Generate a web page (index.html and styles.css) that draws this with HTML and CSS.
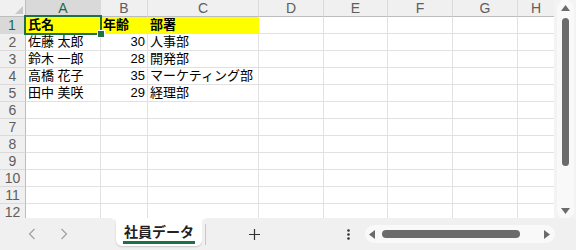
FILE: index.html
```html
<!DOCTYPE html>
<html lang="ja">
<head>
<meta charset="utf-8">
<link rel="stylesheet" href="styles.css">
</head>
<body>
<div class="app">
  <div class="main">
    <div class="sheet">
      <div class="grid">
        <div class="cell corner"><svg class="corner-tri" width="8" height="8" viewBox="0 0 8 8"><path d="M8 0 L8 8 L0 8 Z" fill="#c8c8c8"/></svg></div>
        <div class="cell ch active">A</div>
        <div class="cell ch">B</div>
        <div class="cell ch">C</div>
        <div class="cell ch">D</div>
        <div class="cell ch">E</div>
        <div class="cell ch">F</div>
        <div class="cell ch">G</div>
        <div class="cell ch">H</div>

        <div class="cell rh active">1</div>
        <div class="cell fill b">氏名</div>
        <div class="cell fill b">年齢</div>
        <div class="cell fill b">部署</div>
        <div class="cell"></div><div class="cell"></div><div class="cell"></div><div class="cell"></div><div class="cell"></div>

        <div class="cell rh">2</div>
        <div class="cell">佐藤 太郎</div>
        <div class="cell num">30</div>
        <div class="cell">人事部</div>
        <div class="cell"></div><div class="cell"></div><div class="cell"></div><div class="cell"></div><div class="cell"></div>

        <div class="cell rh">3</div>
        <div class="cell">鈴木 一郎</div>
        <div class="cell num">28</div>
        <div class="cell">開発部</div>
        <div class="cell"></div><div class="cell"></div><div class="cell"></div><div class="cell"></div><div class="cell"></div>

        <div class="cell rh">4</div>
        <div class="cell">高橋 花子</div>
        <div class="cell num">35</div>
        <div class="cell">マーケティング部</div>
        <div class="cell"></div><div class="cell"></div><div class="cell"></div><div class="cell"></div><div class="cell"></div>

        <div class="cell rh">5</div>
        <div class="cell">田中 美咲</div>
        <div class="cell num">29</div>
        <div class="cell">経理部</div>
        <div class="cell"></div><div class="cell"></div><div class="cell"></div><div class="cell"></div><div class="cell"></div>

        <div class="cell rh">6</div>
        <div class="cell"></div><div class="cell"></div><div class="cell"></div><div class="cell"></div><div class="cell"></div><div class="cell"></div><div class="cell"></div><div class="cell"></div>
        <div class="cell rh">7</div>
        <div class="cell"></div><div class="cell"></div><div class="cell"></div><div class="cell"></div><div class="cell"></div><div class="cell"></div><div class="cell"></div><div class="cell"></div>
        <div class="cell rh">8</div>
        <div class="cell"></div><div class="cell"></div><div class="cell"></div><div class="cell"></div><div class="cell"></div><div class="cell"></div><div class="cell"></div><div class="cell"></div>
        <div class="cell rh">9</div>
        <div class="cell"></div><div class="cell"></div><div class="cell"></div><div class="cell"></div><div class="cell"></div><div class="cell"></div><div class="cell"></div><div class="cell"></div>
        <div class="cell rh">10</div>
        <div class="cell"></div><div class="cell"></div><div class="cell"></div><div class="cell"></div><div class="cell"></div><div class="cell"></div><div class="cell"></div><div class="cell"></div>
        <div class="cell rh">11</div>
        <div class="cell"></div><div class="cell"></div><div class="cell"></div><div class="cell"></div><div class="cell"></div><div class="cell"></div><div class="cell"></div><div class="cell"></div>
        <div class="cell rh">12</div>
        <div class="cell"></div><div class="cell"></div><div class="cell"></div><div class="cell"></div><div class="cell"></div><div class="cell"></div><div class="cell"></div><div class="cell"></div>
      </div>
      <div class="selection"><span class="handle"></span></div>
    </div>
    <div class="vscroll">
      <div class="vtrack">
        <svg class="tri" width="9" height="6" viewBox="0 0 9 6"><path d="M4.5 0 L9 6 L0 6 Z" fill="#6b6b6b"/></svg>
        <div class="vthumb"></div>
        <div class="vspace"></div>
        <svg class="tri" width="9" height="6" viewBox="0 0 9 6"><path d="M0 0 L9 0 L4.5 6 Z" fill="#6b6b6b"/></svg>
      </div>
    </div>
  </div>
  <div class="bottom">
    <div class="nav">
      <svg width="8" height="12" viewBox="0 0 8 12"><path d="M6.5 1 L1.5 6 L6.5 11" fill="none" stroke="#a0a0a0" stroke-width="1.2"/></svg>
      <svg width="8" height="12" viewBox="0 0 8 12"><path d="M1.5 1 L6.5 6 L1.5 11" fill="none" stroke="#a0a0a0" stroke-width="1.2"/></svg>
    </div>
    <div class="tabwrap">
      <div class="tab"><span class="tab-label">社員データ</span></div>
    </div>
    <div class="tools">
      <div class="sep"></div>
      <svg class="plus" width="11" height="11" viewBox="0 0 11 11"><path d="M5.5 0 V11 M0 5.5 H11" stroke="#333" stroke-width="1.2"/></svg>
      <svg class="dots" width="3" height="11" viewBox="0 0 3 11"><circle cx="1.5" cy="1.5" r="1.3" fill="#333"/><circle cx="1.5" cy="5.5" r="1.3" fill="#333"/><circle cx="1.5" cy="9.5" r="1.3" fill="#333"/></svg>
      <div class="htrack">
        <svg width="6" height="9" viewBox="0 0 6 9"><path d="M0 4.5 L6 0 L6 9 Z" fill="#6b6b6b"/></svg>
        <div class="hthumb"></div>
        <div class="hspace"></div>
        <svg width="6" height="9" viewBox="0 0 6 9"><path d="M0 0 L6 4.5 L0 9 Z" fill="#6b6b6b"/></svg>
      </div>
    </div>
  </div>
</div>
</body>
</html>
```

FILE: styles.css
```css
html, body {
  margin: 0;
  padding: 0;
  background: #ffffff;
}
body {
  font-family: "Liberation Sans", "Noto Sans CJK JP", sans-serif;
  width: 576px;
  height: 250px;
  overflow: hidden;
}
.app {
  display: flex;
  flex-direction: column;
  width: 576px;
  height: 250px;
}
.main {
  display: flex;
  height: 218px;
  flex: none;
}
.sheet {
  position: relative;
  flex: 1;
  overflow: hidden;
  background: #fff;
}
.grid {
  display: grid;
  grid-template-columns: 26px 75px 47px 111px 65px 64px 65px 65px 37px;
  grid-template-rows: repeat(13, 17px);
}
.cell {
  box-sizing: border-box;
  border-right: 1px solid #e1e1e1;
  border-bottom: 1px solid #e1e1e1;
  font-size: 13px;
  line-height: 16px;
  padding: 0 2px;
  color: #000;
  white-space: nowrap;
  overflow: visible;
}
.corner {
  background: #f0f0f0;
  border-right: 1px solid #bdbdbd;
  border-bottom: 1px solid #bdbdbd;
  position: relative;
}
.corner-tri {
  position: absolute;
  right: 2px;
  bottom: 2px;
}
.ch {
  background: #f0f0f0;
  color: #5e5e5e;
  text-align: center;
  border-right-color: #dadada;
  border-bottom: 1px solid #bdbdbd;
  font-size: 14px;
}
.rh {
  background: #f0f0f0;
  color: #5e5e5e;
  text-align: center;
  border-right: 1px solid #bdbdbd;
  border-bottom-color: #dadada;
  padding: 0;
  font-size: 14px;
}
.ch.active, .rh.active {
  background: #d9d9d9;
  color: #1b6a3f;
}
.ch.active {
  border-bottom: 2px solid #1e7145;
}
.rh.active {
  border-right: 2px solid #1e7145;
}
.fill {
  background: #ffff00;
  border-right-color: #ffff00;
}
.b {
  font-weight: bold;
}
.num {
  text-align: right;
}
.selection {
  position: absolute;
  left: 24px;
  top: 15px;
  width: 78px;
  height: 20px;
  box-sizing: border-box;
  border: 2px solid #1e7145;
}
.handle {
  position: absolute;
  right: -5px;
  bottom: -5px;
  width: 6px;
  height: 6px;
  background: #1e7145;
  border: 1px solid #fff;
}
.vscroll {
  width: 22px;
  flex: none;
  background: #f3f3f3;
  display: flex;
  justify-content: center;
}
.vtrack {
  width: 17px;
  height: 219px;
  background: #f9f9f9;
  border-radius: 9px;
  display: flex;
  flex-direction: column;
  align-items: center;
  padding: 5px 0 5px;
  box-sizing: border-box;
}
.vthumb {
  width: 7px;
  height: 148px;
  margin-top: 7px;
  background: #6b6b6b;
  border-radius: 4px;
}
.vspace {
  flex: 1;
}
.bottom {
  flex: 1;
  background: #ffffff;
  display: flex;
  align-items: stretch;
}
.nav {
  width: 116px;
  display: flex;
  align-items: center;
  gap: 24px;
  padding-left: 28px;
  box-sizing: border-box;
  background: #f0f0f0;
  border-top-right-radius: 6px;
}
.tabwrap {
  width: 86px;
  background: #f0f0f0;
  display: flex;
  flex-direction: column;
}
.tab {
  height: 28px;
  background: #fff;
  border-radius: 0 0 6px 6px;
  box-shadow: 0 1px 2px rgba(0,0,0,0.16);
  display: flex;
  justify-content: center;
  box-sizing: border-box;
  padding-top: 4px;
}
.tab-label {
  font-family: "Noto Sans CJK JP", sans-serif;
  font-weight: bold;
  font-size: 14px;
  line-height: 18px;
  color: #222;
  border-bottom: 3px solid #1e7145;
  height: 19px;
  padding: 0 1px;
}
.tools {
  flex: 1;
  display: flex;
  align-items: center;
  background: #f0f0f0;
  border-top-left-radius: 6px;
}
.sep {
  width: 1px;
  height: 21px;
  background: #c8c8c8;
  margin-left: 3px;
}
.plus {
  margin-left: 43px;
}
.dots {
  margin-left: 87px;
}
.htrack {
  margin-left: 15px;
  width: 190px;
  height: 18px;
  border-radius: 9px;
  background: #f9f9f9;
  display: flex;
  align-items: center;
  padding: 0 5px 0 4px;
  box-sizing: border-box;
}
.hthumb {
  width: 138px;
  height: 8px;
  margin-left: 7px;
  background: #6b6b6b;
  border-radius: 4px;
}
.hspace {
  flex: 1;
}
```
